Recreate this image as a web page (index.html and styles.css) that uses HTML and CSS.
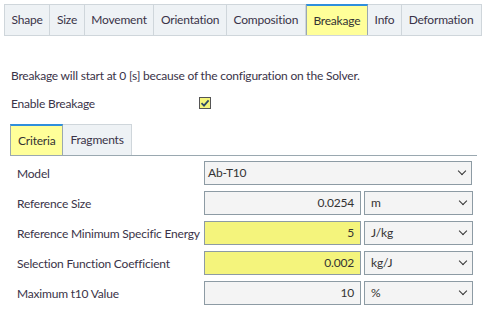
FILE: index.html
```html
<!DOCTYPE html>
<html lang="en">
<head>
  <meta charset="UTF-8">
  <title>Breakage</title>
  <link rel="stylesheet" href="styles.css">
</head>
<body>
  <!-- Pestañas principales -->
  <div class="tabs main-tabs">
    <div class="tab">Shape</div>
    <div class="tab">Size</div>
    <div class="tab">Movement</div>
    <div class="tab">Orientation</div>
    <div class="tab">Composition</div>
    <div class="tab active">Breakage</div>
    <div class="tab">Info</div>
    <div class="tab">Deformation</div>
  </div>

  <p class="note">Breakage will start at 0 [s] because of the configuration on the Solver.</p>

  <div class="enable-row">
    <span class="enable-label">Enable Breakage</span>
    <span class="checkbox">
      <svg width="10" height="10" viewBox="0 0 10 10"><path d="M1.5 5.2 L4 7.6 L8.6 2.4" fill="none" stroke="#2f4a66" stroke-width="1.8"/></svg>
    </span>
  </div>

  <!-- Pestañas internas -->
  <div class="tabs sub-tabs">
    <div class="tab active">Criteria</div>
    <div class="tab">Fragments</div>
  </div>

  <div class="form">
    <div class="row">
      <label>Model</label>
      <div class="select wide">Ab-T10<span class="chev"></span></div>
    </div>
    <div class="row">
      <label>Reference Size</label>
      <div class="input">0.0254</div>
      <div class="select unit">m<span class="chev"></span></div>
    </div>
    <div class="row">
      <label>Reference Minimum Specific Energy</label>
      <div class="input hl">5</div>
      <div class="select unit">J/kg<span class="chev"></span></div>
    </div>
    <div class="row">
      <label>Selection Function Coefficient</label>
      <div class="input hl">0.002</div>
      <div class="select unit">kg/J<span class="chev"></span></div>
    </div>
    <div class="row">
      <label>Maximum t10 Value</label>
      <div class="input">10</div>
      <div class="select unit">%<span class="chev"></span></div>
    </div>
  </div>
</body>
</html>
```

FILE: styles.css
```css
body {
  margin: 0;
  padding: 4px 7px 0 4px;
  font-family: Lato, "Liberation Sans", sans-serif;
  font-size: 12px;
  letter-spacing: -0.2px;
  color: #3a3348;
  background: #fff;
}

.tabs {
  display: flex;
}

.tab {
  background: #eef2f5;
  border: 1px solid #cfd6db;
  border-left: none;
  padding: 0 6.6px;
  height: 30px;
  line-height: 30px;
  white-space: nowrap;
}

.tab:first-child {
  border-left: 1px solid #cfd6db;
}

.tab.active {
  background: #ffff99;
  border-top: 2px solid #2f8fdd;
  border-left: 1px solid #9aa8b0;
  border-right: 1px solid #9aa8b0;
  height: 29px;
  line-height: 29px;
  color: #333;
}

.main-tabs {
  width: 478px;
  border-bottom: 1px solid #cfd6db;
}

.main-tabs .tab {
  flex: none;
  border-bottom: none;
}

.main-tabs .tab:last-child {
  flex: 1;
  min-width: 0;
}

.note {
  margin: 32px 0 0 7px;
  line-height: 16px;
}

.enable-row {
  display: flex;
  align-items: center;
  margin: 11px 0 0 7px;
  height: 16px;
}

.enable-label {
  width: 188px;
}

.checkbox {
  width: 10px;
  height: 10px;
  border: 1px solid #555;
  background: #f5f57a;
  display: flex;
  align-items: center;
  justify-content: center;
}

.sub-tabs {
  margin: 13px 0 0 6px;
  width: 467px;
  border-bottom: 1px solid #9aa8b0;
}

.sub-tabs .tab {
  border-bottom: none;
  padding: 0 7px;
}

.form {
  margin: 5px 0 0 0;
}

.row {
  display: flex;
  align-items: center;
  height: 24px;
  margin-bottom: 6px;
}

.row label {
  width: 187px;
  padding-left: 13px;
  white-space: nowrap;
}

.input,
.select {
  box-sizing: border-box;
  height: 24px;
  line-height: 22px;
  border: 1px solid #8d9ba4;
  background: #f4f4f4;
  color: #333;
}

.input {
  width: 157px;
  text-align: right;
  padding-right: 6px;
}

.input.hl {
  background: #f4f47c;
}

.select {
  position: relative;
  padding-left: 3px;
}

.select.wide {
  width: 268px;
}

.select.unit {
  width: 109px;
  margin-left: 3px;
  padding-left: 6px;
}

.chev {
  position: absolute;
  right: 6px;
  top: 6px;
  width: 5px;
  height: 5px;
  border-right: 1.6px solid #333;
  border-bottom: 1.6px solid #333;
  transform: rotate(45deg);
}
```
